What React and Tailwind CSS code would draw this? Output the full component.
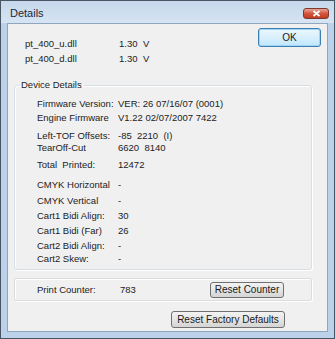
import React from "react";

const dlls = [
  { name: "pt_400_u.dll", ver: "1.30", tag: "V" },
  { name: "pt_400_d.dll", ver: "1.30", tag: "V" },
];

const details = [
  { label: "Firmware Version:", value: "VER: 26 07/16/07 (0001)", gap: "mt-0" },
  { label: "Engine Firmware", value: "V1.22 02/07/2007 7422", gap: "mt-[2px]" },
  { label: "Left-TOF Offsets:", value: "-85  2210  (I)", gap: "mt-[6px]" },
  { label: "TearOff-Cut", value: "6620  8140", gap: "mt-0" },
  { label: "Total  Printed:", value: "12472", gap: "mt-[5px]" },
  { label: "CMYK Horizontal", value: "-", gap: "mt-[8px]" },
  { label: "CMYK Vertical", value: "-", gap: "mt-[4px]" },
  { label: "Cart1 Bidi Align:", value: "30", gap: "mt-[3px]" },
  { label: "Cart1 Bidi (Far)", value: "26", gap: "mt-[3px]" },
  { label: "Cart2 Bidi Align:", value: "-", gap: "mt-[3px]" },
  { label: "Cart2 Skew:", value: "-", gap: "mt-[1px]" },
];

function WinButton({ children, className }) {
  return (
    <button
      className={`rounded-[3px] border border-[#707070] bg-gradient-to-b from-[#f2f2f2] via-[#e6e6e6] to-[#d4d4d4] text-[10px] leading-none text-[#1a1a1a] ${className}`}
    >
      {children}
    </button>
  );
}

export default function App() {
  return (
    <div
      className="w-[335px] h-[339px] flex flex-col bg-[#bcd2ea] border border-[#4a5563] text-[9.5px] text-[#222]"
      style={{ fontFamily: '"Liberation Sans", Arial, sans-serif' }}
    >
      {/* title bar */}
      <div className="h-[22px] shrink-0 flex items-center justify-between pl-[9px] pr-[5px] bg-gradient-to-b from-[#c6d8ec] to-[#d6e4f3]">
        <span className="text-[11px] text-[#1e2a36] mt-[2px]">Details</span>
        <div className="w-[26px] h-[11px] mt-[2px] rounded-[3px] border border-[#7a3a30] bg-gradient-to-b from-[#e8a393] via-[#d2553d] to-[#c23b22] flex items-center justify-center">
          <svg width="9" height="7" viewBox="0 0 9 7">
            <path d="M1.5 1 L7.5 6 M7.5 1 L1.5 6" stroke="#ffffff" strokeWidth="1.8" />
          </svg>
        </div>
      </div>

      {/* client area */}
      <div className="flex-1 mx-[6px] mb-[6px] bg-[#f0f0f0] border border-[#8fa6bf] flex flex-col px-[6px]">
        <div className="flex justify-between">
          <div className="pl-[11px] pt-[14px] flex flex-col gap-[3px]">
            {dlls.map((d) => (
              <div key={d.name} className="flex h-[12px] items-center">
                <span className="w-[94px]">{d.name}</span>
                <span className="w-[24px]">{d.ver}</span>
                <span>{d.tag}</span>
              </div>
            ))}
          </div>
          <button className="mt-[4px] w-[63px] h-[19px] rounded-[3px] border border-[#3c7fb1] bg-gradient-to-b from-[#eaf6fd] via-[#d9f0fc] to-[#bee6fd] shadow-[inset_0_0_0_1px_#9fd5f5] text-[10px] text-[#1a1a1a]">
            OK
          </button>
        </div>

        <fieldset className="mt-[13px] mr-[9px] border border-[#d5dfe5] rounded-[3px] pb-[4px] shadow-[inset_1px_1px_0_#ffffff,1px_1px_0_#ffffff]">
          <legend className="ml-[4px] px-[2px] text-[#222]">Device Details</legend>
          <div className="flex flex-col pt-[6px] pl-[22px]">
            {details.map((r) => (
              <div key={r.label} className={`flex h-[12px] items-center ${r.gap}`}>
                <span className="w-[81px] whitespace-pre">{r.label}</span>
                <span className="whitespace-pre">{r.value}</span>
              </div>
            ))}
          </div>
        </fieldset>

        <div className="mt-[8px] mr-[9px] h-[23px] flex items-center border border-[#dcdcdc] rounded-[2px] pl-[22px] pr-[27px] shadow-[inset_1px_1px_0_#ffffff,1px_1px_0_#ffffff]">
          <span className="w-[83px]">Print Counter:</span>
          <span>783</span>
          <WinButton className="ml-auto w-[74px] h-[16px]">Reset Counter</WinButton>
        </div>

        <div className="flex justify-end mt-[10px] pr-[36px]">
          <WinButton className="w-[114px] h-[17px]">Reset Factory Defaults</WinButton>
        </div>
      </div>
    </div>
  );
}
